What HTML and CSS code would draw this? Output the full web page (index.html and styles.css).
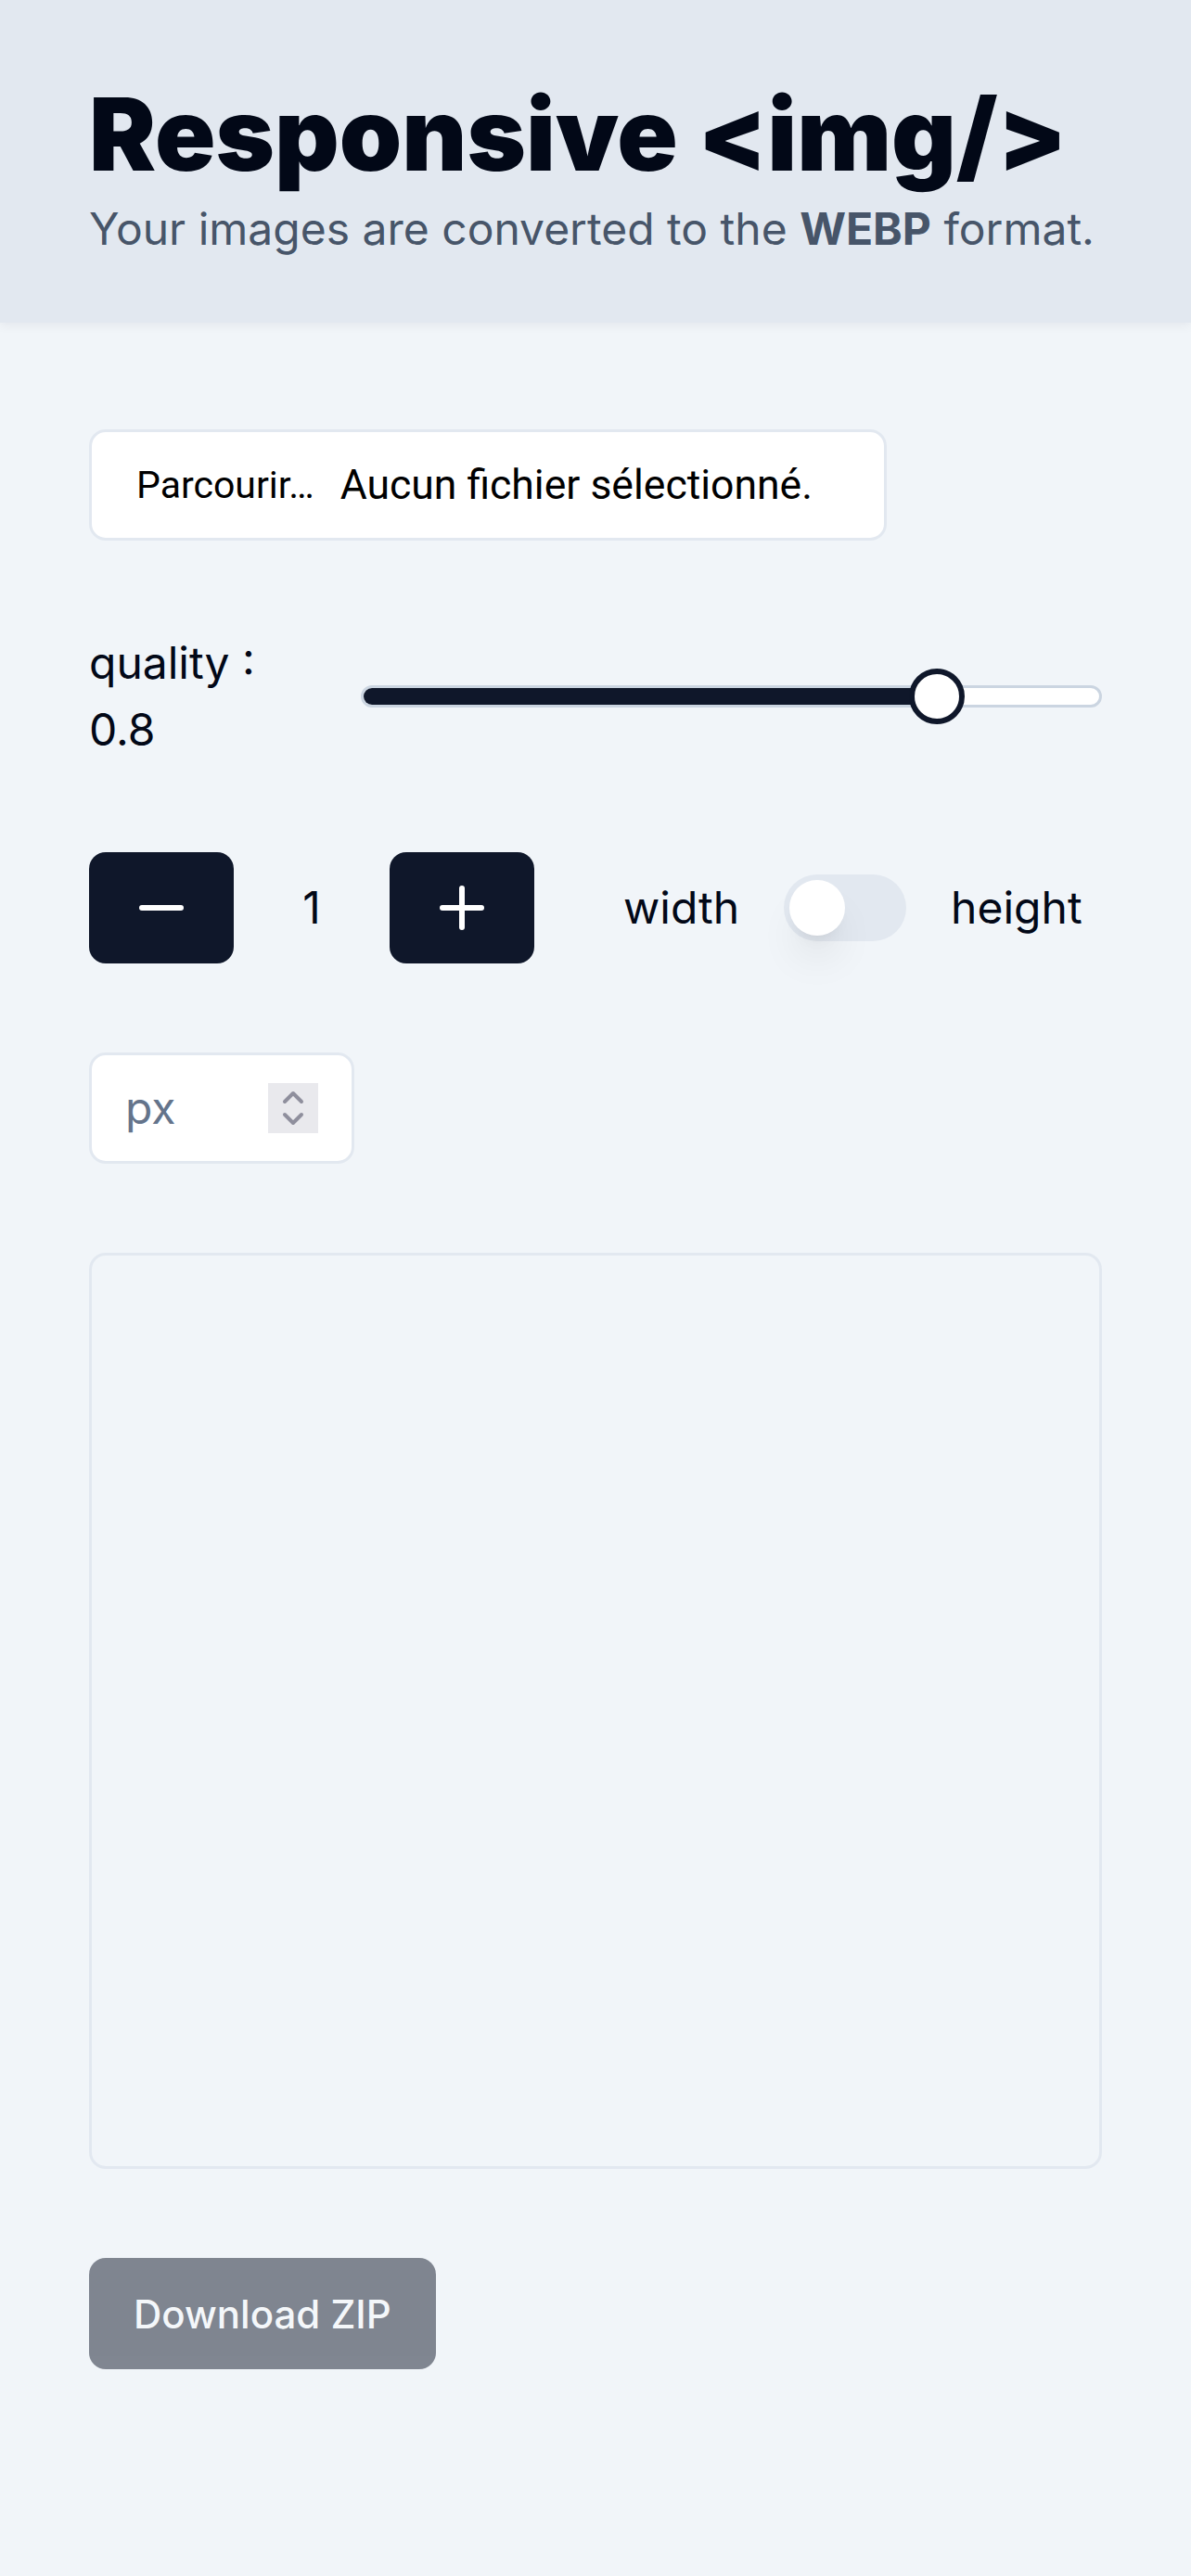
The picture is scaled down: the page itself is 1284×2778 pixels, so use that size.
FILE: index.html
```html
<!DOCTYPE html>
<html lang="fr">
<head>
<meta charset="utf-8">
<title>Responsive img</title>
<link rel="stylesheet" href="styles.css">
</head>
<body>
<header class="hero">
  <h1 class="title">Responsive &lt;img/&gt;</h1>
  <p class="subtitle">Your images are converted to the <strong>WEBP</strong> format.</p>
</header>
<main class="main">
  <div class="file-input"><span class="file-btn">Parcourir…</span><span class="file-name">Aucun fichier sélectionné.</span></div>

  <div class="quality-row">
    <label class="quality-label">quality : 0.8</label>
    <div class="slider">
      <div class="slider-track"><div class="slider-range" style="width:80%"></div></div>
      <div class="slider-thumb" style="left:calc(80% - 18px)"></div>
    </div>
  </div>

  <div class="size-row">
    <button class="icon-btn" type="button">
      <svg width="72" height="72" viewBox="0 0 24 24" fill="none" stroke="#ffffff" stroke-width="2" stroke-linecap="round"><path d="M5 12h14"/></svg>
    </button>
    <span class="count">1</span>
    <button class="icon-btn" type="button">
      <svg width="72" height="72" viewBox="0 0 24 24" fill="none" stroke="#ffffff" stroke-width="2" stroke-linecap="round"><path d="M5 12h14"/><path d="M12 5v14"/></svg>
    </button>
    <div class="axis">
      <span class="axis-label">width</span>
      <span class="switch"><span class="switch-thumb"></span></span>
      <span class="axis-label">height</span>
    </div>
  </div>

  <div class="number-input">
    <span class="placeholder">px</span>
    <span class="spinner">
      <svg width="54" height="54" viewBox="0 0 54 54" fill="none" stroke="#8f8f9d" stroke-width="4" stroke-linecap="round" stroke-linejoin="round"><path d="M18 20l9-9 9 9"/><path d="M18 34l9 9 9-9"/></svg>
    </span>
  </div>

  <div class="preview"></div>

  <button class="download" type="button" disabled>Download ZIP</button>
</main>
</body>
</html>
```

FILE: styles.css
```css
* {
  box-sizing: border-box;
}

html, body {
  margin: 0;
  padding: 0;
}

body {
  background: #f1f5f9;
  color: #020817;
  font-family: Inter, "Noto Sans", sans-serif;
  min-height: 2778px;
}

.hero {
  background: #e2e8f0;
  padding: 85px 96px 65px;
  box-shadow: 0 4px 10px rgba(15, 23, 42, 0.05);
}

.title {
  margin: 0;
  font-size: 108px;
  line-height: 120px;
  font-weight: 900;
  color: #020817;
}

.subtitle {
  margin: 6px 0 0;
  font-size: 48px;
  line-height: 72px;
  color: #475569;
}

.subtitle strong {
  font-weight: 700;
}

.main {
  display: flex;
  flex-direction: column;
  align-items: flex-start;
  gap: 96px;
  padding: 115px 96px 0;
}

.file-input {
  width: 860px;
  height: 120px;
  display: flex;
  align-items: center;
  gap: 28px;
  padding: 0 48px;
  background: #ffffff;
  border: 3px solid #e2e8f0;
  border-radius: 18px;
  font-family: Roboto, "Liberation Sans", sans-serif;
  color: #000000;
}

.file-btn {
  font-size: 41px;
}

.file-name {
  font-size: 44.5px;
}

.quality-row {
  align-self: stretch;
  display: flex;
  align-items: center;
}

.quality-label {
  width: 200px;
  margin-right: 93px;
  font-size: 48px;
  line-height: 72px;
}

.slider {
  flex: 1;
  position: relative;
  height: 60px;
  display: flex;
  align-items: center;
}

.slider-track {
  width: 100%;
  height: 24px;
  background: #ffffff;
  border: 3px solid #cbd5e1;
  border-radius: 999px;
  overflow: hidden;
}

.slider-range {
  height: 100%;
  background: #0f172a;
}

.slider-thumb {
  position: absolute;
  top: 0;
  width: 60px;
  height: 60px;
  border: 6px solid #0f172a;
  border-radius: 50%;
  background: #ffffff;
  transform: translateX(-50%);
}

.size-row {
  display: flex;
  align-items: center;
  gap: 48px;
}

.icon-btn {
  width: 156px;
  height: 120px;
  border: 0;
  border-radius: 18px;
  background: #0f172a;
  display: flex;
  align-items: center;
  justify-content: center;
  padding: 0;
}

.count {
  width: 72px;
  text-align: center;
  font-size: 48px;
  line-height: 72px;
}

.axis {
  margin-left: 48px;
  display: flex;
  align-items: center;
  gap: 48px;
}

.axis-label {
  font-size: 48px;
  line-height: 72px;
}

.switch {
  width: 132px;
  height: 72px;
  border: 6px solid transparent;
  border-radius: 999px;
  background: #e2e8f0;
  display: flex;
}

.switch-thumb {
  width: 60px;
  height: 60px;
  border-radius: 50%;
  background: #ffffff;
  box-shadow: 0 30px 45px -9px rgba(0, 0, 0, 0.1), 0 12px 18px -12px rgba(0, 0, 0, 0.1);
}

.number-input {
  width: 286px;
  height: 120px;
  display: flex;
  align-items: center;
  justify-content: space-between;
  padding: 0 36px;
  background: #ffffff;
  border: 3px solid #e2e8f0;
  border-radius: 18px;
}

.placeholder {
  font-size: 48px;
  line-height: 72px;
  color: #64748b;
}

.spinner {
  width: 54px;
  height: 54px;
  background: #e9e9ed;
  display: block;
}

.spinner svg {
  display: block;
}

.preview {
  align-self: stretch;
  height: 988px;
  border: 3px solid #e2e8f0;
  border-radius: 18px;
}

.download {
  height: 120px;
  padding: 0 48px;
  border: 0;
  border-radius: 18px;
  background: #0f172a;
  color: #f8fafc;
  opacity: 0.5;
  font-family: Inter, "Noto Sans", sans-serif;
  font-size: 42px;
  font-weight: 500;
}
```
